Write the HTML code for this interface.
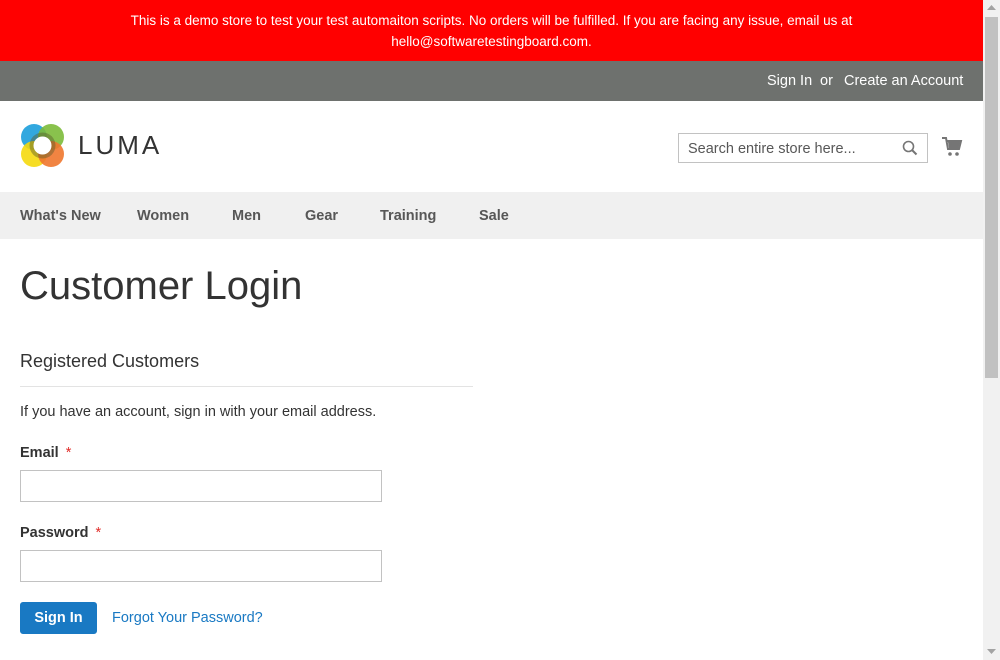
<!DOCTYPE html>
<html><head><meta charset="utf-8"><style>
*{margin:0;padding:0;box-sizing:border-box}
body{width:1000px;height:660px;overflow:hidden;font-family:"Liberation Sans",sans-serif;background:#fff;position:relative;color:#333}
.demo{position:absolute;left:0;top:0;width:983px;height:61px;background:#ff0000;color:#fff;font-size:13.5px;text-align:center;line-height:21px;padding-top:10px}
.top{position:absolute;left:0;top:61px;width:983px;height:40px;background:#6e716e;color:#fff;font-size:14.5px}
.top span{position:absolute;top:12px}
.nav{position:absolute;left:0;top:192px;width:983px;height:47px;background:#f0f0f0;font-size:14.5px;font-weight:bold;color:#575757}
.nav span{position:absolute;top:16px}
.abs{position:absolute}
.sb{position:absolute;left:983px;top:0;width:17px;height:660px;background:#f1f1f1}
.thumb{position:absolute;left:985px;top:17px;width:13px;height:361px;background:#c1c1c1}
</style></head><body>
<div class="demo">This is a demo store to test your test automaiton scripts. No orders will be fulfilled. If you are facing any issue, email us at<br>hello@softwaretestingboard.com.</div>
<div class="top"><span style="left:767px">Sign In</span><span style="left:820px">or</span><span style="left:844px">Create an Account</span></div>
<svg class="abs" style="left:20px;top:123px" width="46" height="46" viewBox="0 0 46 46">
<g style="mix-blend-mode:multiply">
<circle cx="14" cy="14" r="13" fill="#1c9fdc" opacity=".9"/>
<circle cx="31" cy="14" r="13" fill="#7cbb3a" opacity=".9"/>
<circle cx="14" cy="31" r="13" fill="#f5d90d" opacity=".9"/>
<circle cx="31" cy="31" r="13" fill="#f0772e" opacity=".9"/>
<circle cx="22.5" cy="22.5" r="13" fill="#5a5a2a" opacity=".45"/>
</g>
<circle cx="22.5" cy="22.5" r="9" fill="#fff"/>
</svg>
<div class="abs" style="left:78px;top:130px;font-size:26px;letter-spacing:3px;color:#333">LUMA</div>
<div class="abs" style="left:678px;top:133px;width:250px;height:30px;border:1px solid #c2c2c2;font-size:14.5px;color:#575757;padding:7px 9px">Search entire store here...</div>
<svg class="abs" style="left:902px;top:140px" width="16" height="16" viewBox="0 0 16 16"><circle cx="6.5" cy="6.5" r="5" fill="none" stroke="#757575" stroke-width="1.6"/><path d="M10 10l4.5 4.5" stroke="#757575" stroke-width="2"/></svg>
<svg class="abs" style="left:941px;top:136px" width="22" height="22" viewBox="0 0 22 22"><path d="M1 2h4l2 11h11l2-8H6" fill="none" stroke="#757575" stroke-width="2"/><path d="M7 6h12l-1.5 6H8z" fill="#757575"/><circle cx="9" cy="18" r="1.8" fill="#757575"/><circle cx="16" cy="18" r="1.8" fill="#757575"/></svg>
<div class="nav"><span style="left:20px">What's New</span><span style="left:137px">Women</span><span style="left:232px">Men</span><span style="left:305px">Gear</span><span style="left:380px">Training</span><span style="left:479px">Sale</span></div>
<div class="abs" style="left:20px;top:264px;font-size:40px;font-weight:300;color:#333">Customer Login</div>
<div class="abs" style="left:20px;top:351px;font-size:18px;color:#333">Registered Customers</div>
<div class="abs" style="left:20px;top:386px;width:453px;height:1px;background:#e3e3e3"></div>
<div class="abs" style="left:20px;top:404px;font-size:14.5px">If you have an account, sign in with your email address.</div>
<div class="abs" style="left:20px;top:445px;font-size:14.5px;font-weight:bold">Email <span style="color:#e02b27;font-weight:normal;margin-left:3px">*</span></div>
<div class="abs" style="left:20px;top:470px;width:362px;height:32px;border:1px solid #c2c2c2"></div>
<div class="abs" style="left:20px;top:525px;font-size:14.5px;font-weight:bold">Password <span style="color:#e02b27;font-weight:normal;margin-left:3px">*</span></div>
<div class="abs" style="left:20px;top:550px;width:362px;height:32px;border:1px solid #c2c2c2"></div>
<div class="abs" style="left:20px;top:602px;width:77px;height:32px;background:#1979c3;border:1px solid #1979c3;border-radius:3px;color:#fff;font-size:14.5px;font-weight:bold;text-align:center;line-height:31px">Sign In</div>
<div class="abs" style="left:112px;top:610px;font-size:14.5px;color:#1979c3">Forgot Your Password?</div>
<div class="sb"></div><div class="thumb"></div>
<svg class="abs" style="left:987px;top:5px" width="9" height="6"><path d="M0 5L4.5 0L9 5z" fill="#a3a3a3"/></svg>
<svg class="abs" style="left:987px;top:649px" width="9" height="6"><path d="M0 0L4.5 5L9 0z" fill="#a3a3a3"/></svg>
</body></html>
